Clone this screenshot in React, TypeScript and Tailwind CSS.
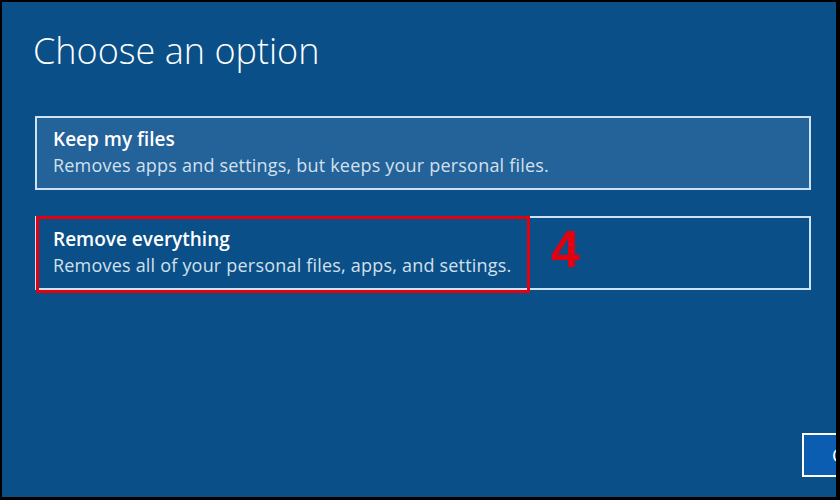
const options = [
  {
    title: "Keep my files",
    desc: "Removes apps and settings, but keeps your personal files.",
    active: true,
  },
  {
    title: "Remove everything",
    desc: "Removes all of your personal files, apps, and settings.",
    active: false,
  },
];

const App = () => {
  return (
    <div className="w-[840px] h-[500px] bg-black pt-[2px] pl-[2px] pr-[4px] pb-[3px] overflow-hidden">
      <div
        className="relative w-full h-full bg-[#0a4f88] overflow-hidden flex flex-col"
        style={{ fontFamily: '"Open Sans", "Noto Sans", sans-serif' }}
      >
        <h1 className="ml-[31px] mt-[28px] text-[36px] leading-[42px] font-light text-white">
          Choose an option
        </h1>

        <div className="ml-[33px] mt-[44px] w-[776px] flex flex-col gap-[26px]">
          {options.map((o) => (
            <div
              key={o.title}
              className={
                "h-[74px] border-2 border-[#cfe2f3] px-[16px] pt-[9px] " +
                (o.active ? "bg-[#24629a]" : "bg-[#0a4f88]")
              }
            >
              <div className="text-[19px] leading-[25px] font-semibold text-white">{o.title}</div>
              <div className="text-[18px] leading-[27px] text-[#d3e0ec] tracking-[0.2px]">{o.desc}</div>
            </div>
          ))}
        </div>

        <div className="mt-auto mb-[20px] flex justify-end -mr-[70px]">
          <div className="w-[104px] h-[44px] border-2 border-white bg-[#0b5db1] flex items-center pl-[28px] text-[18px] text-white">
            Cancel
          </div>
        </div>

        {/* annotation */}
        <div className="absolute left-[34px] top-[214px] w-[494px] h-[77px] border-[3px] border-[#e3000f]" />
        <div
          className="absolute left-[549px] top-[220px] text-[52px] leading-[54px] font-bold text-[#e3000f]"
          style={{ fontFamily: '"Liberation Sans", Arial, sans-serif' }}
        >
          4
        </div>
      </div>
    </div>
  );
};

export default App;
